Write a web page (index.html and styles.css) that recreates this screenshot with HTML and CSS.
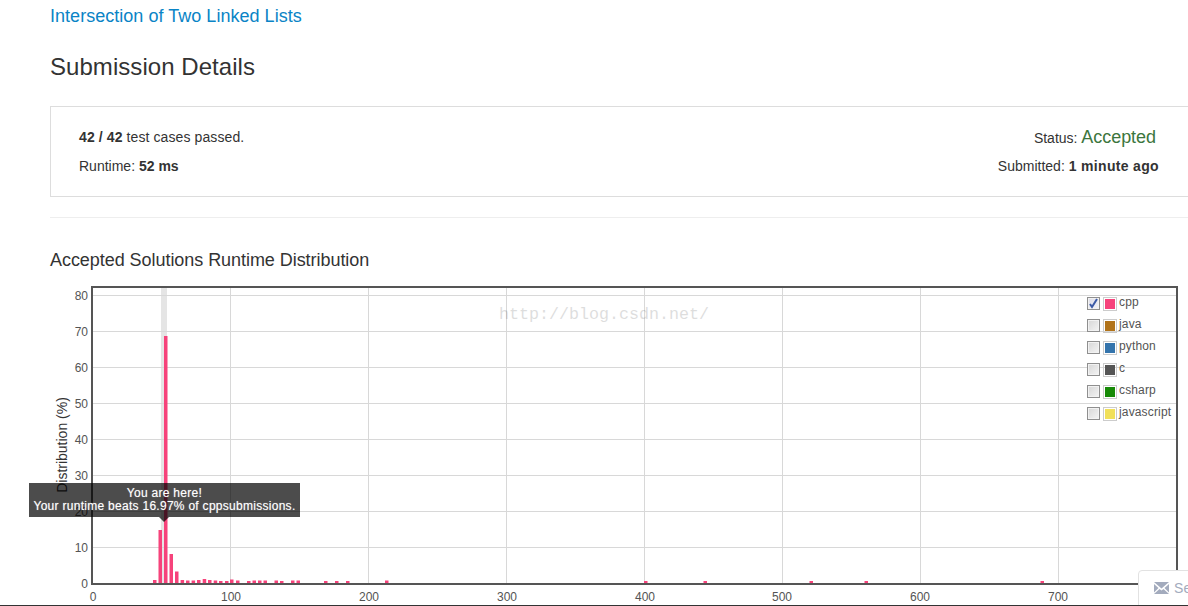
FILE: index.html
```html
<!DOCTYPE html>
<html lang="en">
<head>
<meta charset="utf-8">
<title>Submission Details</title>
<link rel="stylesheet" href="styles.css">
</head>
<body>
<main class="page">
  <a class="problem-link" href="#">Intersection of Two Linked Lists</a>
  <h1 class="page-title">Submission Details</h1>
  <section class="panel">
    <div class="panel-col">
      <div class="row-first"><b>42 / 42</b> test cases passed.</div>
      <div class="row-second">Runtime: <b>52 ms</b></div>
    </div>
    <div class="panel-col panel-right">
      <div class="row-first">Status: <span class="accepted">Accepted</span></div>
      <div class="row-second">Submitted: <b>1 minute ago</b></div>
    </div>
  </section>
  <hr class="divider">
  <h2 class="chart-title">Accepted Solutions Runtime Distribution</h2>
  <div class="chart">
    <svg class="plot" width="1138" height="326" viewBox="50 280 1138 326">
      <rect class="hilite" x="161" y="288" width="6" height="295"/>
      <g class="grid">
        <path d="M93 295.5H1176M93 331.5H1176M93 367.5H1176M93 403.5H1176M93 439.5H1176M93 475.5H1176M93 511.5H1176M93 547.5H1176"/>
        <path d="M230.5 288V583M368.5 288V583M506.5 288V583M644.5 288V583M782.5 288V583M920.5 288V583M1058.5 288V583"/>
      </g>
      <g class="bars">
        <rect x="153" y="580" width="3.5" height="3"/>
        <rect x="158.5" y="530" width="3.5" height="53"/>
        <rect x="164" y="336" width="3.5" height="247"/>
        <rect x="169.5" y="554" width="3.5" height="29"/>
        <rect x="175" y="571.5" width="3.5" height="11.5"/>
        <rect x="180.6" y="580" width="3.5" height="3"/>
        <rect x="186" y="580.5" width="3.5" height="2.5"/>
        <rect x="191.6" y="580.5" width="3.5" height="2.5"/>
        <rect x="197" y="580" width="3.5" height="3"/>
        <rect x="202.7" y="579" width="3.5" height="4"/>
        <rect x="208" y="580" width="3.5" height="3"/>
        <rect x="213.7" y="580.5" width="3.5" height="2.5"/>
        <rect x="219" y="581" width="3.5" height="2"/>
        <rect x="225" y="581" width="3.5" height="2"/>
        <rect x="230" y="579.5" width="3.5" height="3.5"/>
        <rect x="236" y="580.5" width="3.5" height="2.5"/>
        <rect x="247" y="581" width="3.5" height="2"/>
        <rect x="252.5" y="580.5" width="3.5" height="2.5"/>
        <rect x="258" y="580.5" width="3.5" height="2.5"/>
        <rect x="263.5" y="580.5" width="3.5" height="2.5"/>
        <rect x="274.5" y="580.5" width="3.5" height="2.5"/>
        <rect x="280" y="581" width="3.5" height="2"/>
        <rect x="291" y="580.5" width="3.5" height="2.5"/>
        <rect x="296.5" y="580.5" width="3.5" height="2.5"/>
        <rect x="324" y="581" width="3.5" height="2"/>
        <rect x="335" y="581" width="3.5" height="2"/>
        <rect x="346" y="581" width="3.5" height="2"/>
        <rect x="385" y="580.5" width="3.5" height="2.5"/>
        <rect x="644" y="581" width="3.5" height="2"/>
        <rect x="703.5" y="581" width="3.5" height="2"/>
        <rect x="809.5" y="581" width="3.5" height="2"/>
        <rect x="864.5" y="581" width="3.5" height="2"/>
        <rect x="1040.5" y="581" width="3.5" height="2"/>
      </g>
      <path class="frame" d="M92 584V287H1177V584Z"/>
      <g class="tick tick-y">
        <text x="88" y="300">80</text>
        <text x="88" y="336">70</text>
        <text x="88" y="372">60</text>
        <text x="88" y="408">50</text>
        <text x="88" y="444">40</text>
        <text x="88" y="480">30</text>
        <text x="88" y="516">20</text>
        <text x="88" y="552">10</text>
        <text x="88" y="588">0</text>
      </g>
      <g class="tick tick-x">
        <text x="93" y="601">0</text>
        <text x="231" y="601">100</text>
        <text x="369" y="601">200</text>
        <text x="507" y="601">300</text>
        <text x="645" y="601">400</text>
        <text x="782" y="601">500</text>
        <text x="920" y="601">600</text>
        <text x="1058" y="601">700</text>
      </g>
      <text class="axis-label" transform="translate(67 445) rotate(-90)">Distribution (%)</text>
      <text class="watermark" x="499" y="319">http://blog.csdn.net/</text>
    </svg>
    <ul class="legend">
      <li class="legend-row"><span class="check is-on"><svg width="11" height="11" viewBox="0 0 11 11"><path class="tick-mark" d="M2 6l2 3 5-8"/></svg></span><span class="swatch"><i class="c-cpp"></i></span>cpp</li>
      <li class="legend-row"><span class="check"></span><span class="swatch"><i class="c-java"></i></span>java</li>
      <li class="legend-row"><span class="check"></span><span class="swatch"><i class="c-python"></i></span>python</li>
      <li class="legend-row"><span class="check"></span><span class="swatch"><i class="c-c"></i></span>c</li>
      <li class="legend-row"><span class="check"></span><span class="swatch"><i class="c-csharp"></i></span>csharp</li>
      <li class="legend-row"><span class="check"></span><span class="swatch"><i class="c-js"></i></span>javascript</li>
    </ul>
    <div class="tooltip">You are here!<br>Your runtime beats 16.97% of cppsubmissions.</div>
  </div>
</main>
<a class="feedback" href="#"><svg width="15" height="12" viewBox="0 0 15 12"><path class="mail" d="M0 0H15L7.5 6.5ZM0 2L4.5 6 0 10.5ZM15 2V10.5L10.5 6ZM0 12L5.5 7 7.5 8.5 9.5 7 15 12Z"/></svg><span>Send Feedback</span></a>
<div class="edge"></div>
</body>
</html>
```
FILE: styles.css
```css
html, body {
  margin: 0;
  height: 606px;
  overflow: hidden;
  background: #fff;
}
body {
  position: relative;
  font-family: "Liberation Sans", Arial, sans-serif;
  font-size: 14px;
  letter-spacing: 0.1px;
  color: #333;
}
.page {
  width: 1140px;
  margin-left: 50px;
  padding-top: 6px;
}
.problem-link {
  display: block;
  font-size: 18px;
  line-height: 21px;
  letter-spacing: 0.03px;
  color: #0a84c6;
  text-decoration: none;
}
.page-title {
  margin: 26px 0 0;
  font-size: 24px;
  font-weight: 400;
  line-height: 28px;
  letter-spacing: 0.05px;
}
.panel {
  display: flex;
  justify-content: space-between;
  box-sizing: border-box;
  height: 91px;
  margin-top: 25px;
  padding: 22px 30px 0 28px;
  border: 1px solid #ddd;
}
.panel-right { text-align: right; letter-spacing: 0; }
.panel-right b { letter-spacing: 0.33px; }
.row-first { height: 29px; line-height: 17px; }
.row-second { line-height: 17px; letter-spacing: 0; }
.accepted {
  margin-right: 3px;
  font-size: 18px;
  letter-spacing: -0.05px;
  color: #3c763d;
}
.divider {
  height: 1px;
  margin: 20px 0 0;
  border: 0;
  background: #eee;
}
.chart-title {
  margin: 32px 0 0;
  font-size: 18px;
  font-weight: 400;
  line-height: 20px;
  letter-spacing: -0.05px;
}
.chart {
  position: relative;
  margin-top: 10px;
  height: 326px;
}
.plot { display: block; }
.hilite { fill: #e5e5e5; }
.grid path { fill: none; stroke: #d8d8d8; stroke-width: 1; }
.bars rect { fill: #f6437b; }
.frame { fill: none; stroke: #555; stroke-width: 2; }
.tick text { font-size: 12px; letter-spacing: 0; fill: #545454; }
.tick-y text { text-anchor: end; }
.tick-x text { text-anchor: middle; }
.axis-label { font-size: 14px; letter-spacing: 0; fill: #333; text-anchor: middle; }
.watermark {
  font-family: "Liberation Mono", monospace;
  font-size: 16.67px;
  letter-spacing: 0;
  fill: #000;
  opacity: 0.13;
}
.legend {
  position: absolute;
  left: 1037px;
  top: 16px;
  margin: 0;
  padding: 0;
  list-style: none;
  font-size: 12px;
  letter-spacing: 0.15px;
  color: #545454;
}
.legend-row {
  display: flex;
  align-items: flex-start;
  height: 22px;
  line-height: 12px;
}
.check {
  box-sizing: border-box;
  display: flex;
  width: 13px;
  height: 13px;
  margin-top: 1px;
  border: 1px solid #8f8f8f;
  background: linear-gradient(135deg, #d6d6d6, #f4f4f4);
  box-shadow: inset 0 0 0 1px #f2f2f2;
}
.check.is-on { background: linear-gradient(135deg, #dcdce8, #f4f4fa); }
.tick-mark { fill: none; stroke: #3c5aa6; stroke-width: 2; }
.swatch {
  box-sizing: border-box;
  display: block;
  width: 14px;
  height: 14px;
  margin: 1px 2px 0 3px;
  padding: 1px;
  border: 1px solid #ccc;
}
.swatch i { display: block; width: 10px; height: 10px; }
.c-cpp { background: #f6437b; }
.c-java { background: #b1731a; }
.c-python { background: #3474ac; }
.c-c { background: #555; }
.c-csharp { background: #178a07; }
.c-js { background: #f1e05a; }
.tooltip {
  position: absolute;
  left: -21px;
  top: 203px;
  box-sizing: border-box;
  width: 271px;
  height: 34px;
  padding-top: 4px;
  background: rgba(0, 0, 0, 0.7);
  color: #fff;
  font-size: 12px;
  line-height: 13px;
  letter-spacing: 0.28px;
  text-align: center;
  white-space: nowrap;
  text-shadow: 0 0 1px rgba(255, 255, 255, 0.5);
}
.tooltip::after {
  content: "";
  position: absolute;
  left: 130px;
  top: 34px;
  border: 5px solid transparent;
  border-top-color: rgba(0, 0, 0, 0.7);
  border-bottom: 0;
}
.feedback {
  position: absolute;
  left: 1138px;
  top: 570px;
  display: flex;
  align-items: center;
  gap: 5px;
  box-sizing: border-box;
  width: 140px;
  height: 40px;
  padding: 0 0 4px 15px;
  background: #fff;
  border: 1px solid #e2e2e2;
  border-radius: 4px 0 0 0;
  color: #a3abbd;
  font-size: 14px;
  text-decoration: none;
  white-space: nowrap;
}
.mail { fill: #a3abbd; }
.edge {
  position: absolute;
  left: 0;
  right: 0;
  top: 605px;
  height: 1px;
  background: #333;
}
```
